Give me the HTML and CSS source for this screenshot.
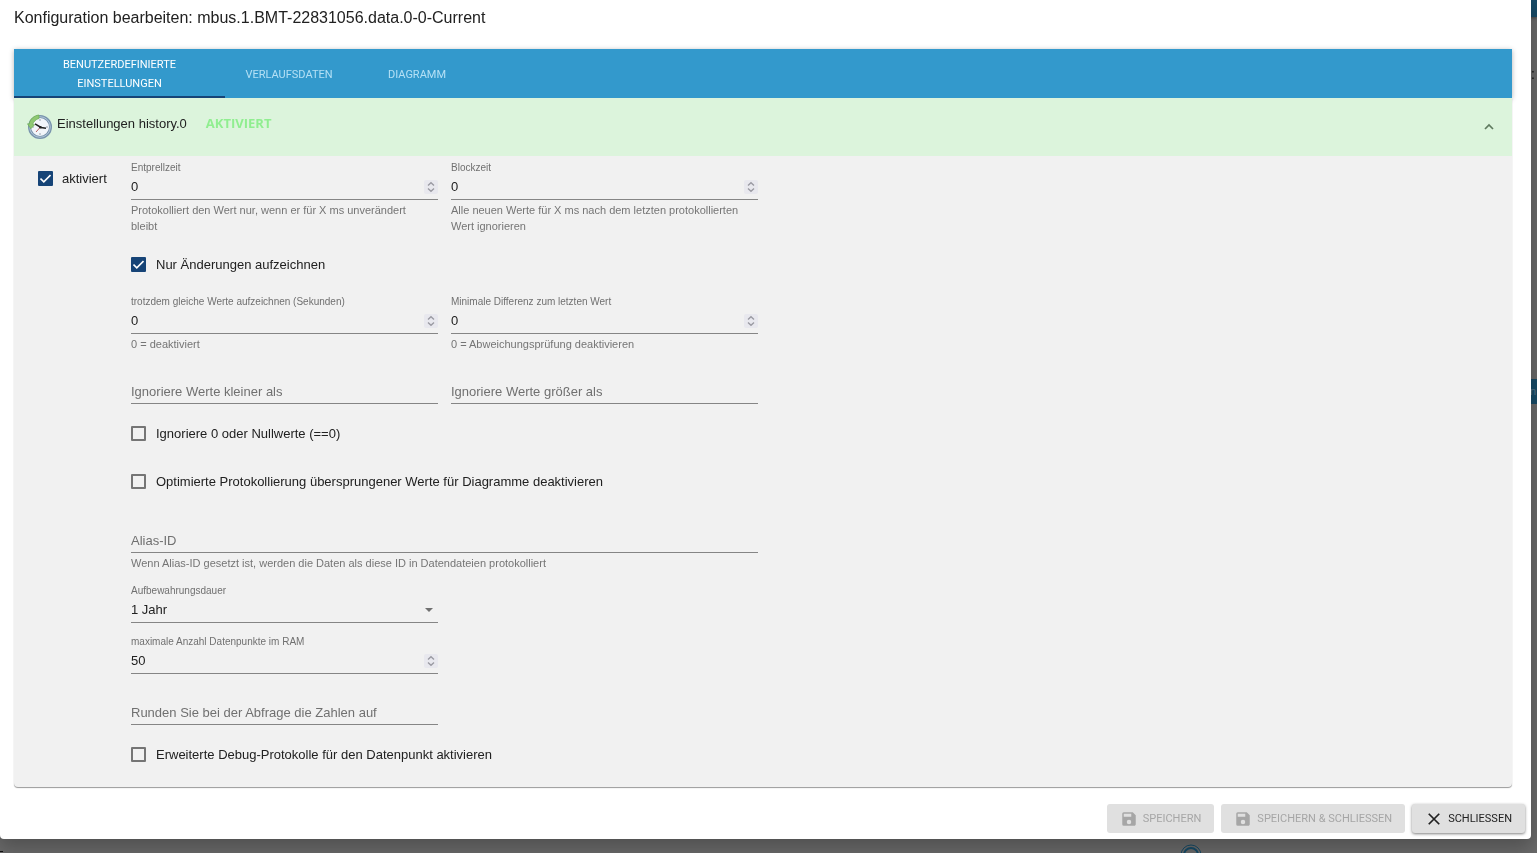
FILE: index.html
```html
<!DOCTYPE html>
<html lang="de">
<head>
<meta charset="utf-8">
<meta name="viewport" content="width=device-width, initial-scale=1">
<title>Konfiguration bearbeiten</title>
<link rel="stylesheet" href="styles.css">
</head>
<body>
<div class="backdrop" aria-hidden="true">
  <span class="backdrop-header"></span>
  <span class="backdrop-mark">:</span>
  <span class="backdrop-row">n</span>
  <span class="backdrop-dash"></span>
  <svg class="backdrop-badge" viewBox="0 0 22 22" fill="none" stroke="#174b67"><circle cx="11" cy="11" r="10"/><circle cx="11" cy="11" r="7" stroke-width="2"/></svg>
</div>
<svg class="symbols" aria-hidden="true">
  <symbol id="spin" viewBox="0 0 14 14"><path d="M4 5.500 7 2.800l3 2.700M4 8.500l3 2.700 3-2.700" fill="none" stroke="#9a9aa2" stroke-width="1.400"/></symbol>
  <symbol id="save" viewBox="0 0 24 24"><path fill="currentColor" d="M17 3H5a2 2 0 0 0-2 2v14a2 2 0 0 0 2 2h14c1.100 0 2-.9 2-2V7l-4-4zm-5 16a3 3 0 1 1 0-6 3 3 0 0 1 0 6zm3-10H5V5h10v4z"/></symbol>
</svg>
<main class="dialog" role="dialog" aria-labelledby="title">
  <h1 class="title" id="title">Konfiguration bearbeiten: mbus.1.BMT-22831056.data.0-0-Current</h1>
  <div class="content">
    <div class="tabs" role="tablist">
      <button class="tab tab-wide selected" role="tab" aria-selected="true">BENUTZERDEFINIERTE EINSTELLUNGEN</button>
      <button class="tab" role="tab" aria-selected="false">VERLAUFSDATEN</button>
      <button class="tab" role="tab" aria-selected="false">DIAGRAMM</button>
    </div>
    <section class="panel">
      <button class="summary" aria-expanded="true">
        <svg class="clock" viewBox="0 0 26 26">
          <circle cx="13" cy="13" r="10.500" fill="#f2f5fa" stroke="#7893ad" stroke-width="3"/>
          <circle cx="13" cy="13" r="10.300" fill="none" stroke="#b1c6d8"/>
          <path d="M13 5v2M13 19v2M5 13h2M19 13h2" stroke="#9aa5b0"/>
          <path d="M12 1C7 1.500 3 5 2.200 10L.5 9.800l3.300 4.900 3.700-3.900-1.900-.3C6.700 7.500 9 5.200 12 4.500z" fill="#8fc872" stroke="#6cad55" stroke-width=".7"/>
          <path d="m13 13.500-4 4.500" stroke="#b66464"/>
          <path d="m8 9.800 6 3.700 5 .8" fill="none" stroke="#222" stroke-width="1.500"/>
          <circle cx="13.500" cy="13.200" r="1.300" fill="#222"/>
        </svg>
        <span class="summary-name">Einstellungen history.0</span>
        <span class="status">AKTIVIERT</span>
        <svg class="chevron" viewBox="0 0 20 20"><path d="m6 12 4-4 4 4" fill="none" stroke="#5f7a5f" stroke-width="1.700"/></svg>
      </button>
      <div class="settings">
        <label class="check enabled"><input type="checkbox" checked>aktiviert</label>
        <div class="fields">
          <div class="field"><label for="debounce">Entprellzeit</label><input id="debounce" type="number" value="0"><svg class="spin"><use href="#spin"/></svg><p>Protokolliert den Wert nur, wenn er für X ms unverändert<br>bleibt</p></div>
          <div class="field"><label for="block">Blockzeit</label><input id="block" type="number" value="0"><svg class="spin"><use href="#spin"/></svg><p>Alle neuen Werte für X ms nach dem letzten protokollierten<br>Wert ignorieren</p></div>
          <label class="check wide"><input type="checkbox" checked>Nur Änderungen aufzeichnen</label>
          <div class="field"><label for="same">trotzdem gleiche Werte aufzeichnen (Sekunden)</label><input id="same" type="number" value="0"><svg class="spin"><use href="#spin"/></svg><p>0 = deaktiviert</p></div>
          <div class="field"><label for="delta">Minimale Differenz zum letzten Wert</label><input id="delta" type="number" value="0"><svg class="spin"><use href="#spin"/></svg><p>0 = Abweichungsprüfung deaktivieren</p></div>
          <div class="field resting"><label for="below">Ignoriere Werte kleiner als</label><input id="below" type="text"></div>
          <div class="field resting"><label for="above">Ignoriere Werte größer als</label><input id="above" type="text"></div>
          <label class="check wide"><input type="checkbox">Ignoriere 0 oder Nullwerte (==0)</label>
          <label class="check wide"><input type="checkbox">Optimierte Protokollierung übersprungener Werte für Diagramme deaktivieren</label>
          <div class="field resting wide alias"><label for="alias">Alias-ID</label><input id="alias" type="text"><p>Wenn Alias-ID gesetzt ist, werden die Daten als diese ID in Datendateien protokolliert</p></div>
          <div class="field single"><label for="retention">Aufbewahrungsdauer</label><select id="retention"><option>1 Jahr</option></select><svg class="arrow" viewBox="0 0 8 4"><path d="M0 0h8L4 4z" fill="#707070"/></svg></div>
          <div class="field single"><label for="ram">maximale Anzahl Datenpunkte im RAM</label><input id="ram" type="number" value="50"><svg class="spin"><use href="#spin"/></svg></div>
          <div class="field single resting"><label for="round">Runden Sie bei der Abfrage die Zahlen auf</label><input id="round" type="text"></div>
          <label class="check wide"><input type="checkbox">Erweiterte Debug-Protokolle für den Datenpunkt aktivieren</label>
        </div>
      </div>
    </section>
  </div>
  <footer class="actions">
    <button class="action" disabled><svg viewBox="0 0 24 24"><use href="#save"/></svg>SPEICHERN</button>
    <button class="action" disabled><svg viewBox="0 0 24 24"><use href="#save"/></svg>SPEICHERN &amp; SCHLIESSEN</button>
    <button class="action close"><svg viewBox="0 0 24 24"><path d="m5 5 14 14M19 5 5 19" fill="none" stroke="currentColor" stroke-width="2.300"/></svg>SCHLIESSEN</button>
  </footer>
</main>
</body>
</html>
```
FILE: styles.css
```css
* { box-sizing: border-box; }
body {
  margin: 0;
  min-height: 100vh;
  overflow: hidden;
  background: #6b6b6b;
  color: #212121;
  font-family: "Liberation Sans", Arial, sans-serif;
  font-size: 13px;
}
button, input, select { font: inherit; color: inherit; }
button { border: 0; padding: 0; cursor: pointer; }
h1, p { margin: 0; }
.symbols { position: absolute; width: 0; height: 0; }

.backdrop { position: fixed; inset: 0; overflow: hidden; }
.backdrop > * { position: absolute; }
.backdrop-header { top: 0; right: 0; left: 0; height: 17px; background: #174b67; box-shadow: 0 1px 3px #444; }
.backdrop-mark { top: 66px; right: 2px; color: #111; font-size: 14px; }
.backdrop-row { top: 379px; right: 0; width: 40px; height: 25px; padding-right: 1px; background: #174b67; color: #577689; line-height: 25px; text-align: right; font-size: 11px; }
.backdrop-dash { bottom: 1px; left: 0; width: 3px; height: 1px; background: #111; }
.backdrop-badge { bottom: -13px; left: 1180px; width: 22px; height: 22px; }

.dialog {
  position: relative;
  margin-right: 6px;
  background: #fff;
  border-radius: 0 0 4px 4px;
  box-shadow: 0 8px 20px 2px rgba(0, 0, 0, .25);
}
.title { padding: 6px 14px 19px; font-size: 16px; font-weight: 400; line-height: 24px; }
.content { padding: 0 19px 0 14px; }

.tabs { position: relative; display: flex; height: 49px; background: #3399cc; box-shadow: 0 1px 5px rgba(0, 0, 0, .3); }
.tab { width: 128px; padding: 2px 12px 0; background: none; color: #b4e0f5; font-family: Roboto, sans-serif; font-size: 11px; line-height: 19px; }
.tab-wide { width: 211px; padding: 2px 40px 0; }
.tab.selected { color: #fff; border-bottom: 2px solid #164477; }

.panel { position: relative; background: #f1f1f1; border-radius: 0 0 4px 4px; box-shadow: 0 1px 1px rgba(0, 0, 0, .4); }
.summary { display: flex; align-items: center; width: 100%; height: 58px; padding: 0 13px; background: #dcf4dc; text-align: left; }
.clock { width: 26px; height: 26px; margin-right: 4px; }
.summary-name, .status { padding-bottom: 6px; line-height: 20px; }
.status { margin-left: 19px; padding-bottom: 8px; color: #90ee90; font-family: "Open Sans", sans-serif; font-size: 13px; font-weight: 700; }
.chevron { width: 20px; height: 20px; margin-left: auto; }

.settings { display: grid; grid-template-columns: 93px 1fr; padding: 5px 0 14px 24px; }
.fields { display: grid; grid-template-columns: 1fr 1fr; gap: 12px 13px; width: 45.4%; }
.wide { grid-column: 1 / -1; }
.single { grid-column: 1; }

.check { display: flex; align-items: center; gap: 10px; height: 24px; margin: 5px 0 7px; }
.check input {
  appearance: none;
  flex: none;
  width: 15px;
  height: 15px;
  margin: 0;
  border: 2px solid #757575;
  border-radius: 1px;
}
.check input:checked {
  border-color: #164477;
  background: #164477 url("data:image/svg+xml,%3Csvg xmlns='http://www.w3.org/2000/svg' viewBox='0 0 11 11'%3E%3Cpath d='M.5 5.500l3.300 3.300L10.500 2' fill='none' stroke='white' stroke-width='1.600'/%3E%3C/svg%3E") center / 11px no-repeat;
}
.enabled { align-self: start; gap: 9px; }

.field { display: grid; grid-template-columns: minmax(0, 1fr); grid-template-rows: 14px 25px auto; align-content: start; }
.field > * { grid-column: 1; }
.field label { color: #707070; font-size: 10px; line-height: 14px; }
.field input, .field select {
  grid-row: 2;
  width: 100%;
  padding: 0 0 2px;
  border: 0;
  border-bottom: 1px solid #858585;
  border-radius: 0;
  background: none;
  appearance: none;
  outline: none;
}
.field input[type="number"] { appearance: textfield; }
.field p { grid-row: 3; padding: 2px 0 1px; color: #757575; font-size: 11px; line-height: 16px; white-space: nowrap; }
.field.resting label { grid-row: 2; font-size: 13px; line-height: 26px; pointer-events: none; }
.alias { margin-top: 2px; }
.spin, .arrow { grid-row: 2; place-self: center end; pointer-events: none; }
.spin { width: 14px; height: 14px; margin-bottom: 2px; background: #e8e8ee; border-radius: 2px; }
.arrow { width: 8px; height: 4px; margin: 0 5px 2px 0; }

.actions { display: flex; justify-content: flex-end; gap: 7px; padding: 17px 6px 6px; }
.action { display: flex; align-items: center; gap: 5px; height: 29px; padding: 0 13px; border-radius: 3px; background: #e0e0e0; color: #212121; font-family: Roboto, sans-serif; font-size: 11px; }
.action:disabled { color: #a6a6a6; cursor: default; }
.action svg { width: 18px; height: 18px; }
.close { box-shadow: 0 1px 3px rgba(0, 0, 0, .5); }
```
